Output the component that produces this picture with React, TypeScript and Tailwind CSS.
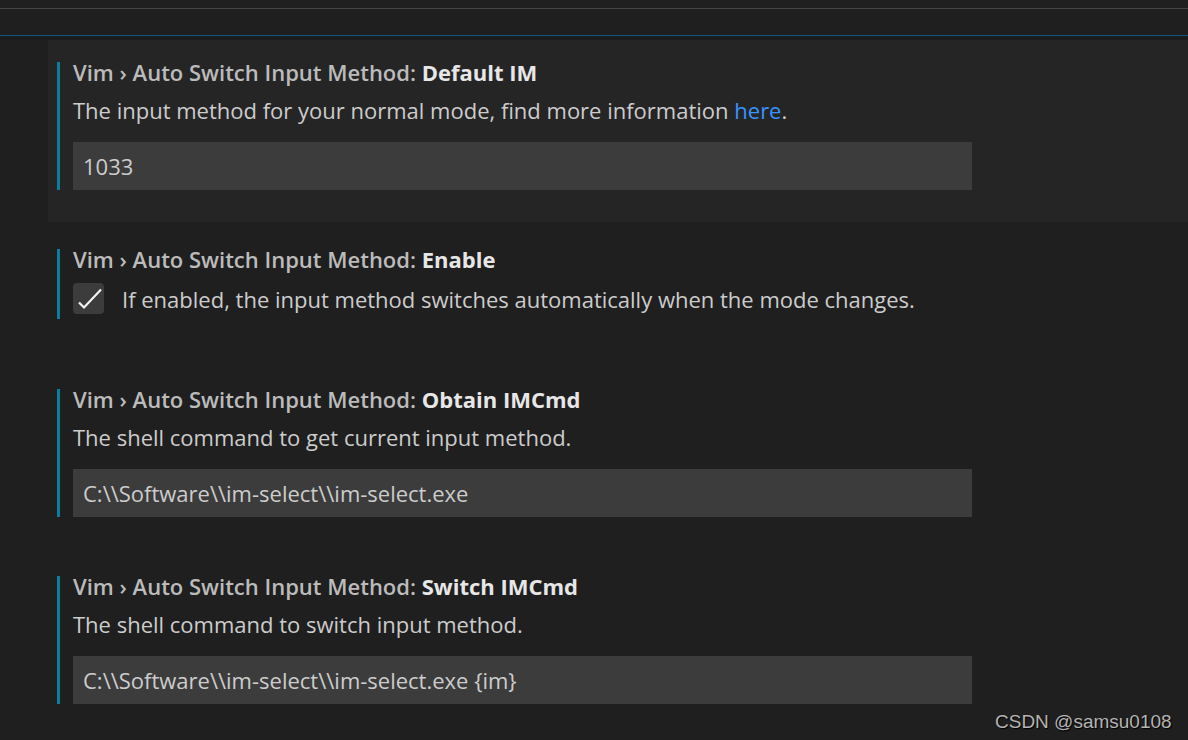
import React from 'react';

const font = { fontFamily: '"Open Sans", "Noto Sans", sans-serif' };

function Title({ name }: { name: string }) {
  return (
    <div className="h-[24px] leading-[21px] text-[22px] font-semibold text-[#bbbbbb] whitespace-nowrap">
      Vim › Auto Switch Input Method: <span className="font-bold text-[#e7e7e7]">{name}</span>
    </div>
  );
}

function Desc({ children }: { children: React.ReactNode }) {
  return (
    <div className="mt-[13px] h-[24px] leading-[22px] text-[22px] text-[#cccccc] whitespace-nowrap">
      {children}
    </div>
  );
}

function TextInput({ value }: { value: string }) {
  return (
    <div className="mt-[19px] h-[48px] w-[899px] bg-[#3c3c3c] pl-[10px] flex items-center text-[22px] text-[#cccccc] whitespace-nowrap">
      {value}
    </div>
  );
}

function Bar({ children }: { children: React.ReactNode }) {
  return (
    <div className="flex">
      <div className="w-[3px] bg-[#0c7d9d] shrink-0" />
      <div className="pl-[13px]">{children}</div>
    </div>
  );
}

export default function App() {
  return (
    <div className="relative w-[1188px] h-[740px] overflow-hidden bg-[#1f1f1f] flex flex-col" style={font}>
      <div className="h-[8px] bg-[#202020]" />
      <div className="h-[1px] bg-[#454545]" />
      <div className="h-[26px] bg-[#1f1f1f]" />
      <div className="h-[1px] bg-[#0e5683]" />
      <div className="h-[4px] bg-[#1c1c1c]" />

      <div className="pl-[48px]">
        {/* focused row */}
        <div className="bg-[#252526] pl-[9px] pt-[22px] pb-[32px]">
          <Bar>
            <Title name="Default IM" />
            <Desc>
              The input method for your normal mode, find more information <span className="text-[#3794ff]">here</span>.
            </Desc>
            <TextInput value="1033" />
          </Bar>
        </div>

        <div className="pl-[9px] pt-[27px]">
          <Bar>
            <Title name="Enable" />
            <div className="mt-[10px] flex items-center gap-[18px] pb-[5px]">
              <div className="w-[31px] h-[31px] rounded-[4px] bg-[#3c3c3c] flex items-center justify-center">
                <svg width="31" height="31" viewBox="0 0 31 31">
                  <path d="M6 19.5 L11 24.5 L28 6.5" fill="none" stroke="#f2f2f2" strokeWidth="2.2" />
                </svg>
              </div>
              <div className="text-[22px] text-[#cccccc] whitespace-nowrap leading-[24px]">
                If enabled, the input method switches automatically when the mode changes.
              </div>
            </div>
          </Bar>
        </div>

        <div className="pl-[9px] pt-[70px]">
          <Bar>
            <Title name="Obtain IMCmd" />
            <Desc>The shell command to get current input method.</Desc>
            <TextInput value={"C:\\\\Software\\\\im-select\\\\im-select.exe"} />
          </Bar>
        </div>

        <div className="pl-[9px] pt-[59px]">
          <Bar>
            <Title name="Switch IMCmd" />
            <Desc>The shell command to switch input method.</Desc>
            <TextInput value={"C:\\\\Software\\\\im-select\\\\im-select.exe {im}"} />
          </Bar>
        </div>
      </div>

      <div
        className="absolute left-[995px] top-[711px] text-[19px] leading-[22px] text-[#b4b4b4] whitespace-nowrap"
        style={{ fontFamily: '"Liberation Sans", Arial, sans-serif', textShadow: '1px 1px 1px #000' }}
      >
        CSDN @samsu0108
      </div>
    </div>
  );
}
